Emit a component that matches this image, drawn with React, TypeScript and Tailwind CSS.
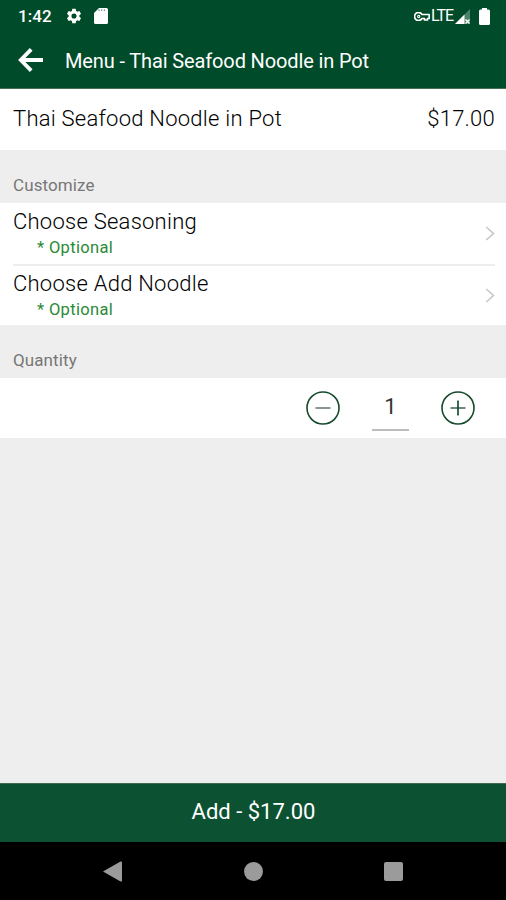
import React from 'react';

interface OptionRowProps {
  name: string;
  last?: boolean;
}

const options = [
  { id: 'seasoning', name: 'Choose Seasoning' },
  { id: 'noodle', name: 'Choose Add Noodle' }
];

function StatusBar() {
  return (
    <div className="flex h-8 items-center pl-[18px] pr-4 text-white">
      <span className="w-[47px] text-[17px] font-medium leading-none tracking-[0.1px]">1:42</span>
      <svg className="h-[18px] w-[18px]" viewBox="0 0 24 24" fill="currentColor">
        <path d="M19.14 12.94c.04-.3.06-.61.06-.94s-.02-.64-.07-.94l2.03-1.58a.49.49 0 0 0 .12-.61l-1.92-3.32a.49.49 0 0 0-.59-.22l-2.39.96a7 7 0 0 0-1.62-.94l-.36-2.54a.48.48 0 0 0-.48-.41h-3.84a.48.48 0 0 0-.47.41l-.36 2.54c-.59.24-1.13.57-1.62.94l-2.39-.96a.48.48 0 0 0-.59.22L2.74 8.87c-.12.21-.08.47.12.61l2.03 1.58c-.05.3-.09.63-.09.94s.02.64.07.94l-2.03 1.58a.49.49 0 0 0-.12.61l1.92 3.32c.12.22.37.29.59.22l2.39-.96c.5.38 1.03.7 1.62.94l.36 2.54c.05.24.24.41.48.41h3.84c.24 0 .44-.17.47-.41l.36-2.54c.59-.24 1.13-.56 1.62-.94l2.39.96c.22.08.47 0 .59-.22l1.92-3.32a.48.48 0 0 0-.12-.61zM12 15.4a3.4 3.4 0 1 1 0-6.8 3.4 3.4 0 0 1 0 6.8z" />
      </svg>
      <svg className="ml-[11px] h-4 w-[14px]" viewBox="0 0 14 16">
        <path d="M5 0h7.5Q14 0 14 1.5v13q0 1.5-1.5 1.500h-11Q0 16 0 14.500V5z" fill="currentColor" />
        <path d="M5 1.500v1.500M7.700 1.500v1.500M10.400 1.500v1.500" stroke="#004b29" strokeWidth="1.200" opacity="0.6" />
      </svg>
      <svg className="ml-auto h-[9px] w-4" viewBox="0 0 16 9" fill="none" stroke="currentColor">
        <path
          d="M8 2.500A4 4 0 1 0 8 6.500H10.500V8H13.500V6.500H15.200V2.500z"
          strokeWidth="1.700"
          strokeLinejoin="round"
        />
        <circle cx="4.700" cy="4.500" r="1.100" strokeWidth="1.100" />
      </svg>
      <span className="ml-px w-[24px] text-[16px] leading-none tracking-[-1px]">LTE</span>
      <svg className="h-[15px] w-[15px]" viewBox="0 0 15 15">
        <path d="M15 0v15H0z" fill="#4c8067" />
        <path d="M9.500 5.500V15H0z" fill="currentColor" />
        <path d="M10.500 10.500l4 4M14.500 10.500l-4 4" stroke="currentColor" strokeWidth="1.400" />
      </svg>
      <svg className="ml-[9px] h-[17px] w-[11px]" viewBox="0 0 11 17" fill="currentColor">
        <path d="M3 0h5v1.500H9.500Q11 1.500 11 3v12.500q0 1.500-1.500 1.500h-8Q0 17 0 15.500V3Q0 1.500 1.500 1.500H3z" />
      </svg>
    </div>
  );
}

function OptionRow({ name, last }: OptionRowProps) {
  return (
    <button
      className={`ml-[13px] mr-[11px] flex items-start text-left ${
        last ? 'h-[59px] pt-[5px]' : 'h-[63px] border-b-2 border-[#ededed] pt-1.5'
      }`}
    >
      <span className="flex-1">
        <span className="block text-[22px] font-light leading-[26px] tracking-[0.25px] text-black">{name}</span>
        <span className="block pl-6 pt-[2px] text-[16.500px] leading-[22px] tracking-[0.35px] text-[#2a8a37]">
          * Optional
        </span>
      </span>
      <svg className="mt-[17px] h-[15px] w-[10px]" viewBox="0 0 10 15" fill="none" stroke="#c4c6c8" strokeWidth="1.600">
        <path d="M1.200 1L8.500 7.500L1.200 14" />
      </svg>
    </button>
  );
}

function SectionLabel({ children }: { children: React.ReactNode }) {
  return (
    <h2 className="flex h-[53px] items-end pb-[7px] pl-[13px] text-[17px] leading-[22px] tracking-[0.1px] text-[#777]">
      {children}
    </h2>
  );
}

export default function App() {
  return (
    <div className="flex h-[900px] w-[506px] flex-col overflow-hidden bg-[#eeeeee] font-[Roboto,sans-serif]">
      <header className="h-[89px] border-b border-[#466f54] bg-[#004b29]">
        <StatusBar />
        <div className="flex h-14 items-center pl-[18px] text-white">
          <svg className="h-6 w-[25px]" viewBox="0 0 25 24" fill="none" stroke="currentColor" strokeWidth="3.800">
            <path d="M13.200 1.400L2.800 12L13.200 22.600M2.800 12H25" />
          </svg>
          <h1 className="ml-[22px] pt-px text-[20px] leading-6 tracking-[-0.13px]">Menu - Thai Seafood Noodle in Pot</h1>
        </div>
      </header>

      <div className="flex h-[61px] items-center justify-between bg-white pb-0.5 pl-[13px] pr-[11px] text-[22px] font-light tracking-[0.25px] text-black">
        <span>Thai Seafood Noodle in Pot</span>
        <span>$17.00</span>
      </div>

      <SectionLabel>Customize</SectionLabel>
      <div className="flex h-[122px] flex-col bg-white">
        {options.map((option, i) => (
          <OptionRow key={option.id} name={option.name} last={i === options.length - 1} />
        ))}
      </div>

      <SectionLabel>Quantity</SectionLabel>
      <div className="flex h-[60px] items-center justify-end bg-white pr-[31px]">
        <svg className="h-[34px] w-[34px]" viewBox="0 0 34 34" fill="none">
          <circle cx="17" cy="17" r="16" stroke="#164a2c" strokeWidth="1.600" />
          <path d="M9.500 17h15" stroke="#8a9690" strokeWidth="2" />
        </svg>
        <span className="mx-8 h-[46px] w-[37px] border-b-2 border-[#bdbdbd] text-center text-[22px] leading-[44px] text-[#333]">
          1
        </span>
        <svg className="h-[34px] w-[34px]" viewBox="0 0 34 34" fill="none">
          <circle cx="17" cy="17" r="16" stroke="#164a2c" strokeWidth="1.600" />
          <path d="M9.500 17h15" stroke="#718a7c" strokeWidth="2" />
          <path d="M17 9.500v15" stroke="#0a4526" strokeWidth="1.600" />
        </svg>
      </div>

      <button className="mt-auto h-[59px] border-t border-[#3f6b51] bg-[#0c5232] pb-1 pl-px text-[22px] text-white">
        Add - $17.00
      </button>
      <nav className="flex h-[58px] items-center bg-black pl-[103px] text-[#9b9b9b]">
        <svg className="h-[21px] w-[19px]" viewBox="0 0 19 22" preserveAspectRatio="none" fill="currentColor">
          <path d="M0 11L17.500 .6Q19 0 19 1.500V20.500Q19 22 17.500 21.400z" />
        </svg>
        <span className="ml-[122px] h-[19px] w-[19px] rounded-full bg-[#9b9b9b]" />
        <span className="ml-[121px] h-[19px] w-[19px] rounded-[2px] bg-[#9b9b9b]" />
      </nav>
    </div>
  );
}
